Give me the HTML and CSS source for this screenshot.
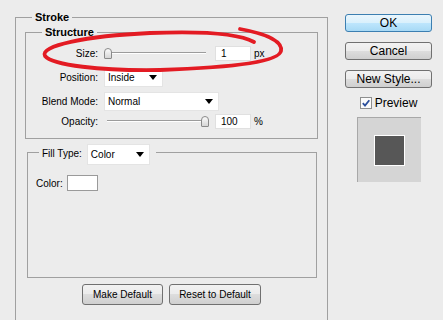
FILE: index.html
```html
<!DOCTYPE html>
<html lang="en">
<head>
    <meta charset="UTF-8">
    <title>Layer Style - Stroke</title>
    <link rel="stylesheet" href="styles.css">
</head>
<body>
    <div class="dialog">
        <!-- Stroke settings -->
        <fieldset class="group group-stroke">
            <legend>Stroke</legend>

            <fieldset class="group group-structure">
                <legend>Structure</legend>
                <div class="rows">
                    <div class="row">
                        <label class="row-label">Size:</label>
                        <div class="slider"><span class="thumb"></span></div>
                        <span class="field">1</span>
                        <span class="unit">px</span>
                    </div>
                    <div class="row">
                        <label class="row-label">Position:</label>
                        <div class="select select-position">
                            <span>Inside</span>
                            <svg width="8" height="5" viewBox="0 0 8 5"><path d="M0 0h8L4 5z"/></svg>
                        </div>
                    </div>
                    <div class="row">
                        <label class="row-label">Blend Mode:</label>
                        <div class="select select-blend">
                            <span>Normal</span>
                            <svg width="8" height="5" viewBox="0 0 8 5"><path d="M0 0h8L4 5z"/></svg>
                        </div>
                    </div>
                    <div class="row row-opacity">
                        <label class="row-label">Opacity:</label>
                        <div class="slider slider-max"><span class="thumb"></span></div>
                        <span class="field">100</span>
                        <span class="unit">%</span>
                    </div>
                </div>
            </fieldset>

            <fieldset class="group group-fill">
                <legend class="fill-legend">
                    <span class="fill-label">Fill Type:</span>
                    <div class="select select-fill">
                        <span>Color</span>
                        <svg width="8" height="5" viewBox="0 0 8 5"><path d="M0 0h8L4 5z"/></svg>
                    </div>
                </legend>
                <div class="color-row">
                    <label>Color:</label>
                    <span class="swatch"></span>
                </div>
            </fieldset>

            <div class="default-buttons">
                <button class="btn btn-make">Make Default</button>
                <button class="btn btn-reset">Reset to Default</button>
            </div>
        </fieldset>

        <!-- Dialog actions -->
        <div class="actions">
            <button class="btn action-btn btn-ok">OK</button>
            <button class="btn action-btn">Cancel</button>
            <button class="btn action-btn">New Style...</button>
            <label class="preview-check">
                <svg class="checkbox" width="12" height="12" viewBox="0 0 12 12">
                    <rect x="0.5" y="0.5" width="11" height="11" fill="#fbfbfb" stroke="#8e8f8f"/>
                    <path d="M2.8 6.2 L5 8.6 L9.3 3.2" fill="none" stroke="#2b4f9c" stroke-width="1.8"/>
                </svg>
                Preview
            </label>
            <div class="preview-swatch">
                <div class="preview-fill"></div>
            </div>
        </div>
    </div>

    <!-- Red hand-drawn markup round the Size row -->
    <svg class="markup" width="443" height="320" viewBox="0 0 443 320">
        <path d="M240 29 C262 33 283 40 281 51 C279 61 240 67 160 70 C100 71 52 65 45 56 C39 46 85 36 150 33 C200 31 238 33 254 42"
              fill="none" stroke="#e31b23" stroke-width="3.8" stroke-linecap="round"/>
    </svg>
</body>
</html>
```

FILE: styles.css
```css
html, body {
    height: 320px;
    overflow: hidden;
}

body {
    margin: 0;
    background-color: #ececec;
    font-family: "Liberation Sans", Arial, sans-serif;
    font-size: 10px;
    color: #000;
}

.dialog {
    display: flex;
    align-items: flex-start;
    padding: 10px 0 0 15px;
}

/* Group boxes */
.group {
    margin: 0;
    min-width: 0;
    border: 1px solid #a0a0a0;
}

.group > legend {
    padding: 0 3px;
    font-size: 11px;
    font-weight: bold;
    line-height: 14px;
}

/* the outer box runs on past the bottom of the dialog */
.group-stroke {
    width: 313px;
    box-sizing: border-box;
    padding: 1px 9px 15px;
    border-bottom: none;
}

.group-stroke > legend {
    margin-left: 7px;
}

.group-structure {
    padding: 4px 0 7px 6px;
}

.group-structure > legend {
    margin-left: 10px;
}

.group-fill {
    margin: 5px 1px 0 2px;
    padding: 15px 0 86px 8px;
}

.group > .fill-legend {
    display: flex;
    align-items: flex-start;
    gap: 5px;
    height: 16px;
    margin-left: 3px;
    padding: 0 6px 0 3px;
    font-size: 10px;
    font-weight: normal;
}

.fill-label {
    line-height: 19px;
}

/* Form rows */
.rows {
    display: flex;
    flex-direction: column;
    gap: 4px;
}

.row {
    display: flex;
    align-items: center;
    height: 20px;
}

.row-opacity {
    margin-top: -4px;
}

.row-label {
    width: 66px;
    margin-right: 6px;
    text-align: right;
}

.slider {
    display: flex;
    align-items: center;
    width: 105px;
    height: 14px;
    background:
        linear-gradient(#9c9c9c, #9c9c9c) no-repeat 3px 6px / 99px 1px,
        linear-gradient(#fff, #fff) no-repeat 3px 7px / 99px 1px;
}

.slider-max {
    justify-content: flex-end;
}

.thumb {
    width: 6px;
    height: 9px;
    border: 1px solid #8a8a8a;
    border-radius: 4px 4px 1px 1px;
    background: linear-gradient(#fbfbfb, #d6d6d6);
}

.field {
    width: 36px;
    height: 15px;
    box-sizing: border-box;
    margin-left: 6px;
    padding-left: 5px;
    line-height: 13px;
    background-color: #fff;
    border: 1px solid #e0e0e0;
}

.unit {
    margin-left: 3px;
}

.select {
    display: flex;
    align-items: center;
    justify-content: space-between;
    height: 19px;
    box-sizing: border-box;
    padding: 0 5px 0 3px;
    background-color: #fff;
    border: 1px solid #e4e4e4;
}

.select svg {
    fill: #000;
}

.select-position {
    width: 59px;
}

.select-blend {
    width: 115px;
}

.select-fill {
    width: 63px;
    height: 21px;
}

.color-row {
    display: flex;
    align-items: center;
    gap: 4px;
    height: 16px;
}

.swatch {
    width: 31px;
    height: 16px;
    box-sizing: border-box;
    background-color: #fff;
    border: 1px solid #9a9a9a;
}

/* Buttons */
.btn {
    padding: 0;
    font-family: "Liberation Sans", Arial, sans-serif;
    font-size: 10px;
    color: #000;
    border: 1px solid #707070;
    border-radius: 3px;
    background: linear-gradient(#f2f2f2 0%, #ebebeb 50%, #dddddd 50%, #cfcfcf 100%);
}

.default-buttons {
    display: flex;
    justify-content: center;
    gap: 6px;
    margin-top: 6px;
}

.default-buttons .btn {
    height: 21px;
}

.btn-make {
    width: 81px;
}

.btn-reset {
    width: 92px;
}

.actions {
    display: flex;
    flex-direction: column;
    align-items: center;
    width: 87px;
    margin: 4px 0 0 17px;
}

.action-btn {
    width: 87px;
    height: 18px;
    margin-bottom: 10px;
    font-size: 12px;
}

.btn-ok {
    border-color: #3c7fb1;
    background: linear-gradient(#eaf6fd 0%, #d9f0fc 50%, #bee6fd 50%, #a7d9f5 100%);
}

.preview-check {
    display: flex;
    align-items: center;
    gap: 3px;
    height: 15px;
    margin-top: -3px;
    font-size: 12px;
}

.preview-swatch {
    display: flex;
    align-items: center;
    justify-content: center;
    width: 64px;
    height: 65px;
    box-sizing: border-box;
    margin-top: 7px;
    background-color: #d5d5d5;
    border-top: 1px solid #a8a8a8;
    border-left: 1px solid #a8a8a8;
}

.preview-fill {
    width: 31px;
    height: 31px;
    box-sizing: border-box;
    background-color: #575757;
    border: 1px solid #fff;
}

/* Red markup overlay */
.markup {
    position: absolute;
    top: 0;
    left: 0;
    pointer-events: none;
}
```
